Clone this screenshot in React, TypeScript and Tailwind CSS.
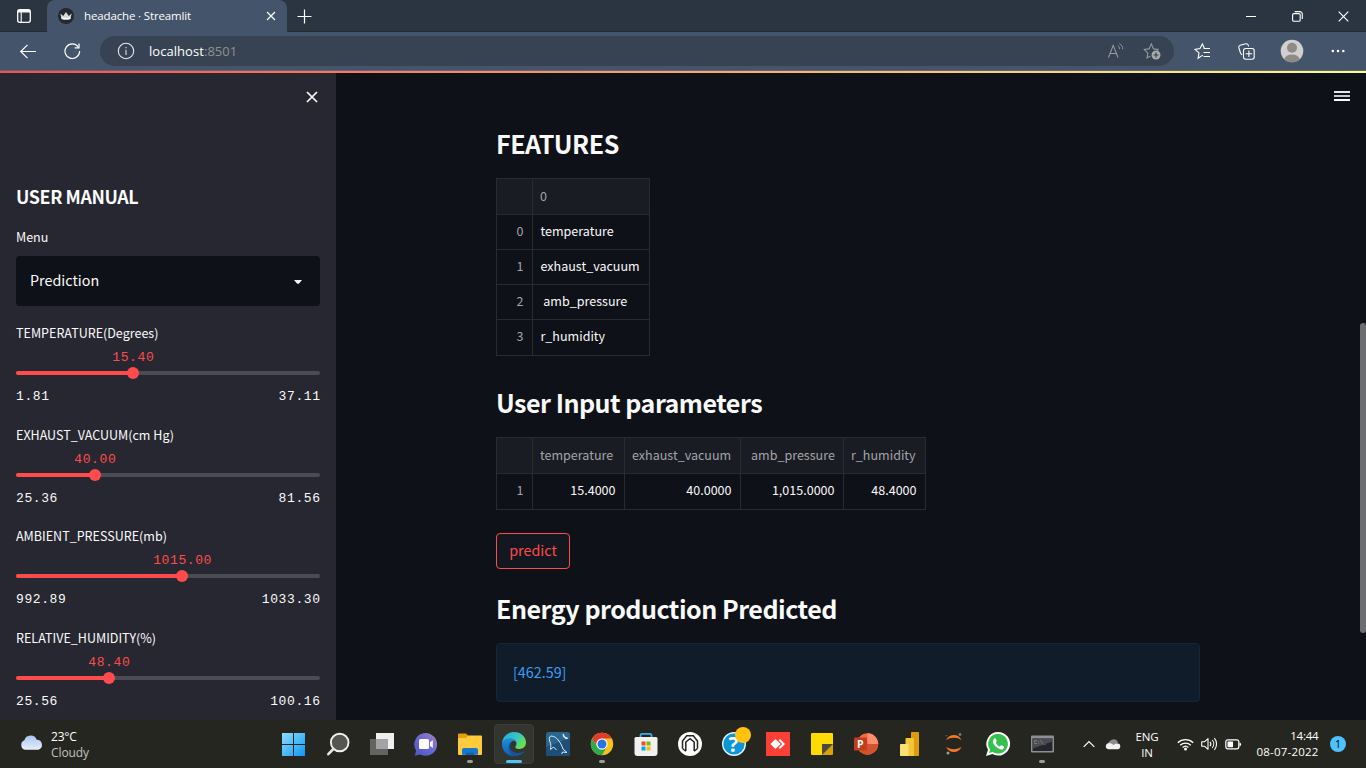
import type { ReactNode } from "react";

const SOURCE = "font-['Noto_Sans_CJK_JP',sans-serif]";
const SEGOE = "font-['Open_Sans',sans-serif]";

function Svg({ w, h, box, children, className = "" }: { w: number; h: number; box: string; children: ReactNode; className?: string }) {
  return (
    <svg width={w} height={h} viewBox={box} fill="none" className={`shrink-0 ${className}`}>
      {children}
    </svg>
  );
}

function TabStrip() {
  return (
    <div className="flex h-8 bg-[#2b3541] shadow-[inset_0_-1px_0_#232c37]">
      <div className="flex w-[47px] items-center pl-4">
        <Svg w={16} h={16} box="0 0 16 16">
          <rect x="1.7" y="1.7" width="12.6" height="12.6" rx="2" stroke="#fff" strokeWidth="1.3" />
          <path d="M2 3.2h12" stroke="#fff" strokeWidth="2.6" />
          <path d="M5.2 4v10" stroke="#fff" strokeWidth="1.1" />
        </Svg>
      </div>
      <div className="flex w-[240px] items-center rounded-t-lg bg-[#44546a] pl-[11px] pr-[11px]">
        <Svg w={16} h={16} box="0 0 16 16">
          <circle cx="8" cy="8" r="8" fill="#262730" />
          <path d="M2.3 5.6 5.2 8 8 4l2.8 4 2.9-2.4-1.4 5.4c-2.7.8-5.9.8-8.6 0z" fill="#d8d8da" />
          <path d="M3.3 9.3c3 .9 6.4.9 9.4 0l-.4 1.7c-2.7.8-5.9.8-8.6 0z" fill="#fff" />
        </Svg>
        <span className="ml-[10px] grow whitespace-nowrap text-[11.5px] tracking-[-0.14px] text-white">headache · Streamlit</span>
        <Svg w={10} h={10} box="0 0 10 10">
          <path d="m1 1 8 8m0-8L1 9" stroke="#fff" strokeWidth="1.2" />
        </Svg>
      </div>
      <div className="flex grow items-center pl-[10px]">
        <Svg w={15} h={15} box="0 0 15 15">
          <path d="M7.5.5v14M.5 7.5h14" stroke="#fff" strokeWidth="1.2" />
        </Svg>
      </div>
      <div className="flex w-[122px] items-center justify-between pr-[17px]">
        <Svg w={10} h={10} box="0 0 10 10" className="ml-[2px]">
          <path d="M0 5.5h10" stroke="#fff" />
        </Svg>
        <Svg w={11} h={11} box="0 0 11 11">
          <rect x=".6" y="2.6" width="7.6" height="7.6" rx="1.3" stroke="#fff" strokeWidth="1.1" />
          <path d="M2.7.6h5.1a2.5 2.5 0 0 1 2.5 2.5v5" stroke="#fff" strokeWidth="1.1" />
        </Svg>
        <Svg w={11} h={11} box="0 0 11 11">
          <path d="m.7.7 9.6 9.6m0-9.6L.7 10.3" stroke="#fff" strokeWidth="1.15" />
        </Svg>
      </div>
    </div>
  );
}

function Toolbar() {
  return (
    <div className="flex h-[39px] items-center border-b border-[#56667c] bg-[#44546a]">
      <Svg w={17} h={15} box="0 0 17 15" className="ml-[19px]">
        <path d="M17 7.5H1.7M8.5.8 1.7 7.5 8.5 14.2" stroke="#fff" strokeWidth="1.15" />
      </Svg>
      <Svg w={17} h={17} box="0 0 17 17" className="ml-[28px]">
        <path d="M14.3 4A7.3 7.3 0 1 0 15.6 8.1" stroke="#fff" strokeWidth="1.2" />
        <path d="M15 .5v4.3h-4.3" stroke="#fff" strokeWidth="1.2" />
      </Svg>
      <div className="ml-[19px] flex h-[30px] w-[1074px] items-center rounded-full bg-[#374353] pl-[17px] pr-[13px]">
        <Svg w={18} h={18} box="0 0 18 18">
          <circle cx="9" cy="9" r="7.7" stroke="#e6e8eb" strokeWidth="1.1" />
          <path d="M9 7.8v5.2M9 4.9v1.4" stroke="#c4c7cb" strokeWidth="1.3" />
        </Svg>
        <span className="ml-[14px] grow whitespace-nowrap pt-px text-[13px] tracking-[0.05px] text-white">
          localhost<span className="text-[#8e918f]">:8501</span>
        </span>
        <Svg w={17} h={16} box="0 0 17 16">
          <path d="M.5 14.5 5.2 2.4 10 14.5M2.1 10.5h6.3" stroke="#96999d" strokeWidth="1.1" />
          <path d="M9.6 2.6c1.4.8 2 2 2 3.6M11.3.6c2.3 1.2 3.4 3 3.4 5.6" stroke="#96999d" strokeWidth="1" />
        </Svg>
        <Svg w={18} h={18} box="0 0 18 18" className="ml-[18px]">
          <path d="M7.5 14 4 16l.9-4.9L1.3 7.5l4.8-.6 2.2-5 2.2 5 4.6.6-1 1.2" stroke="#96999d" strokeWidth="1.1" />
          <circle cx="13" cy="13" r="4.5" fill="#a9aaac" />
          <path d="M13 10.5v5M10.5 13h5" stroke="#374353" strokeWidth="1.2" />
        </Svg>
      </div>
      <Svg w={17} h={17} box="0 0 17 17" className="ml-[20px]">
        <path d="M8.8 12.1 4.1 15.3l.9-5.4L1 6.4l5-.8L8.4 1l2.1 4.6" stroke="#fff" strokeWidth="1.1" />
        <path d="M9.5 5.5H16M9.5 9.5H16M9.5 13.5H16" stroke="#fff" strokeWidth="1.1" />
      </Svg>
      <Svg w={17} h={17} box="0 0 17 17" className="ml-[27px]">
        <path d="M4 11.8 2.5 10 .8 4.7A2.2 2.2 0 0 1 2.2 2.3L7.7.8a2.2 2.2 0 0 1 2.6 1.5l.3 1" stroke="#fff" strokeWidth="1.1" />
        <rect x="5.5" y="5.5" width="10.7" height="10.7" rx="2.2" stroke="#fff" strokeWidth="1.1" />
        <path d="M10.9 7.6V14M7.7 10.8h6.4" stroke="#fff" strokeWidth="1.1" />
      </Svg>
      <Svg w={24} h={24} box="0 0 24 24" className="ml-[25px]">
        <circle cx="12" cy="12" r="11.3" fill="#d2d0ce" />
        <circle cx="12" cy="8.8" r="5" fill="#8e8a86" />
        <path d="M4.2 20.2a8 6 0 0 1 15.6 0 11.3 11.3 0 0 1-15.6 0z" fill="#8e8a86" />
      </Svg>
      <Svg w={14} h={4} box="0 0 14 4" className="ml-[27px]">
        <circle cx="1.8" cy="2" r="1.25" fill="#fff" />
        <circle cx="7" cy="2" r="1.25" fill="#fff" />
        <circle cx="12.3" cy="2" r="1.25" fill="#fff" />
      </Svg>
    </div>
  );
}

type SliderData = { label: string; value: string; min: string; max: string; pos: number };

const SLIDERS: SliderData[] = [
  { label: "TEMPERATURE(Degrees)", value: "15.40", min: "1.81", max: "37.11", pos: 117 },
  { label: "EXHAUST_VACUUM(cm Hg)", value: "40.00", min: "25.36", max: "81.56", pos: 79 },
  { label: "AMBIENT_PRESSURE(mb)", value: "1015.00", min: "992.89", max: "1033.30", pos: 166.3 },
  { label: "RELATIVE_HUMIDITY(%)", value: "48.40", min: "25.56", max: "100.16", pos: 93 },
];

function Slider({ s }: { s: SliderData }) {
  return (
    <div className="h-[101.5px] shrink-0">
      <div className="flex h-5 items-center text-[12.54px] leading-none text-[#fafafa]">{s.label}</div>
      <div className="relative mt-[27.5px] h-1 rounded bg-[#4a4b55]">
        <div className="h-1 rounded-l bg-[#ff4b4b]" style={{ width: s.pos }} />
        <div className="absolute -top-1 h-3 w-3 -translate-x-1/2 rounded-full bg-[#ff4b4b]" style={{ left: s.pos }} />
        <div
          className="absolute -top-[20px] -translate-x-1/2 pl-[0.6px] font-['Liberation_Mono',monospace] text-[13px] leading-none tracking-[0.6px] text-[#ff4b4b]"
          style={{ left: s.pos }}
        >
          {s.value}
        </div>
      </div>
      <div className="-mr-[0.6px] mt-[15px] flex justify-between font-['Liberation_Mono',monospace] text-[13px] leading-none tracking-[0.6px] text-[#fafafa]">
        <span>{s.min}</span>
        <span>{s.max}</span>
      </div>
    </div>
  );
}

function Sidebar() {
  return (
    <div className="flex w-[336px] shrink-0 flex-col overflow-hidden bg-[#262730] px-4">
      <div className="flex h-[109.5px] shrink-0 justify-end pr-[2px] pt-[18px]">
        <Svg w={12} h={12} box="0 0 12 12">
          <path d="m1 1 10 10m0-10L1 11" stroke="#fafafa" strokeWidth="1.7" />
        </Svg>
      </div>
      <div className="flex h-7 shrink-0 items-center text-[17.9px] font-bold leading-none tracking-[-0.4px] text-[#fafafa]">USER MANUAL</div>
      <div className="mt-[16.5px] flex h-5 shrink-0 items-center text-[12.54px] leading-none text-[#fafafa]">Menu</div>
      <div className="mt-[9px] flex h-[50px] shrink-0 items-center justify-between rounded bg-[#0e1117] pb-px pl-[14px] pr-[18px]">
        <span className="text-[14.33px] leading-none text-[#fafafa]">Prediction</span>
        <Svg w={8} h={4} box="0 0 8 4" className="translate-y-px">
          <path d="M0 0h8L5 3.4q-1 .8-2 0z" fill="#fff" />
        </Svg>
      </div>
      <div className="flex flex-col pt-[17.5px]">
        {SLIDERS.map((s) => (
          <Slider key={s.label} s={s} />
        ))}
      </div>
    </div>
  );
}

const LINE = "border-[#292b31]";
const CELL = `flex items-center border-r border-b ${LINE} whitespace-pre text-[12.54px] leading-none`;

function FeatureTable() {
  const names = ["temperature", "exhaust_vacuum", " amb_pressure", "r_humidity"];
  return (
    <div className={`grid w-[154px] grid-cols-[36px_117px] grid-rows-[36px_35px_35px_35px_36px] border-l border-t ${LINE}`}>
      <div className={`${CELL} bg-[#1a1c23]`} />
      <div className={`${CELL} bg-[#1a1c23] pl-[7px] text-[#a3a4a8]`}>0</div>
      {names.map((n, i) => (
        <div key={n} className="contents">
          <div className={`${CELL} justify-end pb-[2px] pr-[8.5px] text-[#a3a4a8]`}>{i}</div>
          <div className={`${CELL} pb-[2px] pl-[7.5px] text-[#fafafa]`}>{n}</div>
        </div>
      ))}
    </div>
  );
}

function InputTable() {
  const heads = ["temperature", "exhaust_vacuum", "amb_pressure", "r_humidity"];
  const values = ["15.4000", "40.0000", "1,015.0000", "48.4000"];
  return (
    <div className={`grid w-[430px] grid-cols-[36px_92px_116px_103px_82px] grid-rows-[36px_36px] border-l border-t ${LINE}`}>
      <div className={`${CELL} bg-[#1a1c23]`} />
      {heads.map((h, i) => (
        <div key={h} className={`${CELL} bg-[#1a1c23] text-[#a3a4a8] ${i === 2 ? "pl-[10px]" : "pl-[7px]"}`}>
          {h}
        </div>
      ))}
      <div className={`${CELL} justify-end pb-[2px] pr-[8.5px] text-[#a3a4a8]`}>1</div>
      {values.map((v) => (
        <div key={v} className={`${CELL} justify-end pb-[2px] pr-[8.5px] text-[#fafafa]`}>
          {v}
        </div>
      ))}
    </div>
  );
}

function Heading({ children }: { children: ReactNode }) {
  return (
    <h3 className="flex h-9 shrink-0 items-center whitespace-nowrap text-[25.07px] font-bold leading-none tracking-[-0.5px] text-[#fafafa]">
      {children}
    </h3>
  );
}

function Main() {
  return (
    <div className="relative flex grow flex-col items-start overflow-hidden bg-[#0e1117] pl-[160px] pt-[53px]">
      <Heading>FEATURES</Heading>
      <div className="h-[16px] shrink-0" />
      <FeatureTable />
      <div className="h-[29px] shrink-0" />
      <Heading>User Input parameters</Heading>
      <div className="h-[16px] shrink-0" />
      <InputTable />
      <button className="mt-[23px] flex h-9 w-[74px] shrink-0 items-center justify-center rounded border border-[#ff4b4b] bg-[#13171f] pb-[2px] text-[14.33px] leading-none text-[#ff4b4b]">
        predict
      </button>
      <div className="h-[22px] shrink-0" />
      <Heading>Energy production Predicted</Heading>
      <div className="mt-[16px] flex h-[59px] w-[704px] shrink-0 items-center rounded border border-[#13263a] bg-[#111c2a] pl-4 text-[14.33px] leading-none text-[#3d9df3]">
        [462.59]
      </div>
      <div className="absolute right-4 top-[18px] flex flex-col gap-[2px]">
        <div className="h-[2px] w-4 bg-[#e8e8e9]" />
        <div className="h-[2px] w-4 bg-[#c8c8ca]" />
        <div className="h-[2px] w-4 bg-[#fafafa]" />
      </div>
      <div className="absolute right-0 top-[250px] h-[310px] w-[6px] rounded-[3px] bg-[#6c6d70]" />
    </div>
  );
}

const APPS: { name: string; mark?: "run" | "active"; art: ReactNode }[] = [
  {
    name: "start",
    art: (
      <>
        <defs>
          <linearGradient id="win" x1="0" y1="0" x2="1" y2="1">
            <stop stopColor="#8be0fd" />
            <stop offset="1" stopColor="#0f96f5" />
          </linearGradient>
        </defs>
        <path d="M0 1h11v11H0zM12 1h11v11H12zM0 13h11v11H0zM12 13h11v11H12z" fill="url(#win)" />
      </>
    ),
  },
  {
    name: "search",
    art: (
      <>
        <circle cx="13.7" cy="10.5" r="8.8" fill="#55564f" stroke="#f0f0f0" strokeWidth="1.9" />
        <path d="m7.3 17-5 5.2" stroke="#e4e4e4" strokeWidth="2.6" strokeLinecap="round" />
      </>
    ),
  },
  {
    name: "task view",
    art: (
      <>
        <rect x="6" y="1" width="18" height="16" fill="#f0f0f0" />
        <rect x="0" y="7" width="18" height="16" fill="#636363" />
        <rect x="6" y="7" width="12" height="10" fill="#a3a3a3" />
      </>
    ),
  },
  {
    name: "chat",
    art: (
      <>
        <defs>
          <linearGradient id="chat" x1="1" y1="0" x2="0" y2="1">
            <stop stopColor="#a77fc0" />
            <stop offset=".5" stopColor="#6a68cf" />
            <stop offset="1" stopColor="#4b55c4" />
          </linearGradient>
        </defs>
        <path d="M11.7 1a11.4 11.4 0 1 1-5.3 21.5L.8 23.7l1.3-5.2A11.4 11.4 0 0 1 11.7 1z" fill="url(#chat)" />
        <rect x="5" y="7" width="10" height="10" rx="1.5" fill="#fff" />
        <path d="m16 10.3 2.8-2v7.6l-2.8-2z" fill="#fff" />
      </>
    ),
  },
  {
    name: "explorer",
    mark: "run",
    art: (
      <>
        <path d="M0 2.5Q0 1.5 1 1.5h7l2.5 2.5V9H0z" fill="#e3a00a" />
        <path d="M0 6h8l2-2.5h13q1 0 1 1V22q0 1-1 1H1q-1 0-1-1z" fill="#ffcb3d" />
        <path d="M4 22.8v-5Q4 16 6 16h12q2 0 2 2v4.8z" fill="#1478cf" />
        <path d="M7.5 22.8v-2h9v2z" fill="#0d5ca8" />
      </>
    ),
  },
  {
    name: "edge",
    mark: "active",
    art: (
      <>
        <defs>
          <linearGradient id="edgeTop" x1="0" y1="0" x2="1" y2=".5">
            <stop stopColor="#2aa6df" />
            <stop offset=".6" stopColor="#35c5c6" />
            <stop offset="1" stopColor="#66e04f" />
          </linearGradient>
          <linearGradient id="edgeLow" x1="0" y1="0" x2="0" y2="1">
            <stop stopColor="#1e90dd" />
            <stop offset="1" stopColor="#0c5fb5" />
          </linearGradient>
        </defs>
        <path d="M0 11.5C.4 4.7 5.5 0 12 0c7 0 12 4.9 12 10.6 0 4-3 6.4-6.4 6.4-2.8 0-4.3-1-4.3-2.1 0-.9 1.2-1.2 1.2-3.2C14.5 9 12 6.9 8.8 6.9 4.8 6.9 1.5 8.9 0 11.5z" fill="url(#edgeTop)" />
        <path d="M0 12C.4 8.3 4 6.2 8.2 6.2c4 0 6.3 2.6 6.3 5.3 0-1.6-1.3-2.7-2.6-2.7-2.7 0-5.1 3-5.1 6.6 0 4 3 8.1 7.2 8.5C6 25.3 0 19.5 0 12z" fill="url(#edgeLow)" />
        <path d="M9.7 10.2c-1 1.1-1.7 2.5-1.7 4.3 0 4.2 4 6.5 8 6.5 2.5 0 4.3-.8 5.7-1.7.6-.3 1 .2.6.7A12 12 0 0 1 14 23.9c-4.2-.4-7.4-4.2-7.4-8.5 0-2.2 1.2-4.3 3.1-5.2z" fill="#1653a0" />
      </>
    ),
  },
  {
    name: "workbench",
    art: (
      <>
        <rect width="24" height="24" rx="2.5" fill="#2c6690" />
        <path d="M0 15 24 6v15.5q0 2.5-2.5 2.5h-19Q0 24 0 21.5z" fill="#1d4f78" />
        <path d="M4.5 17.5c.5-3 .5-5-.5-7.5C3 7.5 2.8 4.500 5 4c3 0 6 2 8 5 2 3 3 5 4 8l4 3.500-4.500-.5-.8 2M4.500 17.500l3-2.500 3 3" stroke="#dfe8ef" strokeWidth="1" />
        <path d="m17 2 1.500 3L22 6.500M17 3.500 20.500 7" stroke="#e8eef3" strokeWidth="1.200" />
      </>
    ),
  },
  {
    name: "chrome",
    mark: "run",
    art: (
      <>
        <circle cx="12" cy="12" r="11.2" fill="#fbc116" />
        <path d="M2.3 6.4A11.2 11.2 0 0 1 21.7 6.4H12A5.6 5.6 0 0 0 7.2 14.8z" fill="#e33b2e" />
        <path d="M2.3 6.4A11.2 11.2 0 0 0 12 23.2l4.9-8.4A5.6 5.6 0 0 1 7.2 14.8z" fill="#2da94f" />
        <circle cx="12" cy="12" r="5.6" fill="#fff" />
        <circle cx="12" cy="12" r="4.5" fill="#2a72e8" />
      </>
    ),
  },
  {
    name: "store",
    art: (
      <>
        <path d="M6.5 6V3.5Q6.5 1.8 8 1.8h8q1.5 0 1.5 1.7V6" stroke="#2eb3ec" strokeWidth="1.8" />
        <path d="M.5 6.5Q.5 5 2 5h20q1.5 0 1.5 1.5V21q0 3-3 3h-17q-3 0-3-3z" fill="#f1f1f1" />
        <path d="M7.5 9.5h4v4h-4z" fill="#f04e22" />
        <path d="M12.5 9.5h4v4h-4z" fill="#7fba00" />
        <path d="M7.5 14.5h4v4h-4z" fill="#05a6f0" />
        <path d="M12.5 14.5h4v4h-4z" fill="#ffba08" />
      </>
    ),
  },
  {
    name: "hexagon",
    art: (
      <>
        <circle cx="12" cy="12" r="12" fill="#fff" />
        <path d="M4.5 16.5V9L8.700 3.800h6.600L19.500 9v7.500" stroke="#24251f" strokeWidth="1.500" />
        <path d="M7.800 19v-9L12 6.600 16.200 10v9" stroke="#24251f" strokeWidth="1.500" />
        <path d="m4.500 16.500 3.300 2.800M19.500 16.500l-3.300 2.800" stroke="#24251f" strokeWidth="1.300" />
      </>
    ),
  },
  {
    name: "help",
    art: (
      <>
        <circle cx="12" cy="12" r="11.3" fill="#0a96d8" stroke="#e7f4fb" strokeWidth="1.4" />
        <text x="11.6" y="19.5" textAnchor="middle" fontSize="21" fontWeight="700" fontFamily="Open Sans" fill="#fff">?</text>
        <circle cx="21" cy="3" r="8" fill="#ffc20e" />
      </>
    ),
  },
  {
    name: "anydesk",
    art: (
      <>
        <rect width="24" height="24" fill="#fa3f36" />
        <path d="m4.5 12 5-5 5 5-5 5z" fill="#fff" />
        <path d="m13.3 7.7 4.3 4.3-4.3 4.3" stroke="#fff" strokeWidth="2" />
      </>
    ),
  },
  {
    name: "notes",
    art: (
      <>
        <path d="M1 2q0-1 1-1h20q1 0 1 1v10L12 23H2q-1 0-1-1z" fill="#ffdc00" />
        <path d="M12 12h11v10q0 1-1 1H12z" fill="#d9a400" />
        <path d="M12 12h11L12 23z" fill="#4a4a48" />
      </>
    ),
  },
  {
    name: "powerpoint",
    art: (
      <>
        <circle cx="13.5" cy="12" r="10.7" fill="#ed6c47" />
        <path d="M13.5 1.3A10.7 10.7 0 0 1 24.2 12H13.5z" fill="#ff8f6b" />
        <path d="M2.8 12h21.4a10.7 10.7 0 0 1-21.4 0z" fill="#d35230" />
        <rect x="0" y="5.5" width="13" height="13" rx="1.2" fill="#c43e1c" />
        <text x="6.2" y="15.8" textAnchor="middle" fontSize="10.5" fontWeight="700" fontFamily="Open Sans" fill="#fff">P</text>
      </>
    ),
  },
  {
    name: "power bi",
    art: (
      <>
        <rect x="13" y="0" width="8" height="24" rx=".8" fill="#dd9c0c" />
        <rect x="7.5" y="6" width="8.5" height="18" rx=".8" fill="#f3c63a" />
        <rect x="2" y="12" width="8.5" height="12" rx=".8" fill="#f8e075" />
      </>
    ),
  },
  {
    name: "jupyter",
    art: (
      <>
        <path d="M4 8.3C7 1.2 17 1.2 19.5 8.3 16 5 8 5 4 8.3zM4 14.7c3 7.1 13 7.1 15.5 0-3.5 3.3-11.5 3.3-15.5 0z" fill="#f37726" />
        <circle cx="18" cy="2.5" r="1.4" fill="#767677" />
        <circle cx="6" cy="21" r="1.5" fill="#9e9e9e" />
        <circle cx="4.5" cy="3.8" r=".8" fill="#6a6a6b" />
      </>
    ),
  },
  {
    name: "whatsapp",
    art: (
      <>
        <path d="M12.2 0A11.8 11.8 0 1 1 6.4 22L0 24l2-6.2A11.8 11.8 0 0 1 12.2 0z" fill="#fff" />
        <path d="M12.2 2A9.8 9.8 0 1 1 6.7 20L3 21.1l1.1-3.5A9.8 9.8 0 0 1 12.2 2z" fill="#35c04e" />
        <path d="M8.2 6.5c.8-.5 1.4-.3 1.7.5l.8 1.9c.2.6-.9 1.5-.8 1.9.8 1.7 2 2.9 3.8 3.6.5.2 1.3-1.4 1.9-1.1l2.1 1c.8.4.3 2-.5 2.6-1.6 1.2-4.4.3-6.8-1.8-2.7-2.4-4.9-5.6-2.2-8.6z" fill="#fff" />
      </>
    ),
  },
  {
    name: "terminal",
    mark: "run",
    art: (
      <>
        <rect x="1" y="3.5" width="23" height="17" rx="1" fill="#8d8f92" />
        <rect x="2.5" y="6.5" width="20" height="12.5" fill="#24262b" />
        <path d="M2.5 6.5h20v3l-20 7z" fill="#4a4c52" />
        <text x="4" y="11.5" fontSize="5" fontFamily="Liberation Mono" fill="#a9abad">C:\_</text>
      </>
    ),
  },
];

function Taskbar() {
  return (
    <div className={`flex h-12 shrink-0 items-center bg-[#262620] text-white ${SEGOE}`}>
      <div className="flex w-[272px] items-center pl-[19px]">
        <Svg w={25} h={17} box="0 0 25 17" className="-translate-y-[2px]">
          <defs>
            <linearGradient id="cl" x1="0" y1="0" x2="0" y2="1">
              <stop stopColor="#a9c4f2" />
              <stop offset="1" stopColor="#e8eff8" />
            </linearGradient>
          </defs>
          <path d="M6 15.8a5 5 0 0 1-.6-9.5 6.5 6.5 0 0 1 12.400-.6A5.200 5.200 0 0 1 19.500 15.800z" fill="url(#cl)" />
        </Svg>
        <div className="ml-[7px] flex flex-col pt-[2px] text-[12px] leading-4 tracking-[-0.2px]">
          <span>23°C</span>
          <span className="tracking-[-0.1px] text-[#c2c2c0]">Cloudy</span>
        </div>
      </div>
      {APPS.map((a) => (
        <div key={a.name} className="flex w-11 shrink-0 justify-center">
          <div
            className={`relative flex h-10 w-10 items-center justify-center rounded ${
              a.mark === "active" ? "border border-[#3d3d37] bg-[#34352f]" : ""
            }`}
          >
            <Svg w={24} h={24} box="0 0 24 24" className="overflow-visible">
              {a.art}
            </Svg>
            {a.mark === "run" && <div className="absolute bottom-[1px] left-[17px] h-[3px] w-[6px] rounded-full bg-[#9b9b98]" />}
            {a.mark === "active" && <div className="absolute bottom-0 left-[11px] h-[3px] w-4 rounded-full bg-[#4cc2ff]" />}
          </div>
        </div>
      ))}
      <div className="flex grow items-center pl-[19px]">
        <Svg w={12} h={8} box="0 0 12 8">
          <path d="M.7 6.8 6 1.5l5.3 5.3" stroke="#fff" strokeWidth="1.2" />
        </Svg>
        <Svg w={17} h={12} box="0 0 17 12" className="ml-[10px]">
          <path d="M3.5 7.5A5 5 0 0 1 13 4.5l-6 5z" fill="#8c8c8a" />
          <path d="M3.3 11.3A3.2 3.2 0 0 1 3.6 5c2 0 3.6.8 5 2 1.7-1.4 3.2-1.7 4.8-1.4a3 3 0 0 1-.2 5.7z" fill="#f2f2f2" />
        </Svg>
        <div className="ml-[12px] flex w-[26px] flex-col items-center whitespace-nowrap pt-px text-[11.5px] leading-4 tracking-[-0.15px]">
          <span>ENG</span>
          <span>IN</span>
        </div>
        <Svg w={17} h={13} box="0 0 17 13" className="ml-[16.5px]">
          <path d="M.8 4.8a11 11 0 0 1 15.4 0M3.2 7.3a7.6 7.6 0 0 1 10.6 0M5.6 9.5a4.3 4.3 0 0 1 5.8 0" stroke="#fff" strokeWidth="1.2" />
          <circle cx="8.5" cy="11" r="1.5" fill="#fff" />
        </Svg>
        <Svg w={17} h={14} box="0 0 17 14" className="ml-[7px]">
          <path d="M.7 4.8h2.8L7 1.7v10.6L3.5 9.2H.7z" stroke="#fff" strokeWidth="1.1" strokeLinejoin="round" />
          <path d="M9 4.8a3.5 3.5 0 0 1 0 4.4M11.2 3a6 6 0 0 1 0 8M13.4 1.2a9 9 0 0 1 0 11.6" stroke="#fff" strokeWidth="1.1" />
        </Svg>
        <Svg w={17} h={11} box="0 0 17 11" className="ml-[7px]">
          <rect x=".8" y=".8" width="13" height="9" rx="2" stroke="#fff" strokeWidth="1.2" />
          <rect x="2.5" y="2.5" width="5.5" height="5.7" rx=".6" fill="#fff" />
          <path d="M14.5 3.6q1.6.2 1.6 1.9t-1.6 1.9z" fill="#fff" />
        </Svg>
        <div className="ml-[14px] flex w-[63px] flex-col items-end whitespace-nowrap text-[11.5px] leading-4 tracking-[0.2px]">
          <span className="tracking-[-0.2px]">14:44</span>
          <span>08-07-2022</span>
        </div>
        <div className="ml-[11.5px] flex h-4 w-4 items-center justify-center rounded-full bg-[#4cc2ff] text-[10.5px] leading-none text-black">1</div>
      </div>
    </div>
  );
}

export default function App() {
  return (
    <div className="flex h-[768px] w-[1366px] flex-col overflow-hidden bg-[#0e1117]">
      <div className={`shrink-0 ${SEGOE}`}>
        <TabStrip />
        <Toolbar />
      </div>
      <div className="h-[2px] shrink-0 bg-[linear-gradient(90deg,#ff4b4b,#fffd80)]" />
      <div className={`flex min-h-0 grow ${SOURCE}`}>
        <Sidebar />
        <Main />
      </div>
      <Taskbar />
    </div>
  );
}
